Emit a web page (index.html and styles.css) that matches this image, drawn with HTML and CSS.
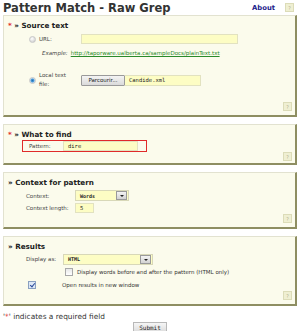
FILE: index.html
```html
<!DOCTYPE html>
<html lang="en">
<head>
    <meta charset="UTF-8">
    <title>Pattern Match - Raw Grep</title>
    <link rel="stylesheet" href="styles.css">
</head>
<body>
    <div class="page">
        <div class="topbar">
            <h1>Pattern Match - Raw Grep</h1>
            <a class="about" href="#">About</a>
            <span class="help">?</span>
        </div>

        <form class="tool-form">
            <!-- source -->
            <div class="panel panel-source">
                <h3><span class="req">*</span> &raquo; Source text</h3>
                <div class="row row-url">
                    <span class="radio"></span>
                    <label class="lbl">URL:</label>
                    <span class="field url-field"></span>
                </div>
                <div class="row row-example">
                    <em>Example:</em>
                    <a class="example-link" href="#">http://taporware.ualberta.ca/sampleDocs/plainText.txt</a>
                </div>
                <div class="row row-file">
                    <span class="radio checked"></span>
                    <label class="lbl lbl-two">Local text<br>file:</label>
                    <span class="file-pick">
                        <span class="browse">Parcourir...</span>
                        <span class="field file-field">Candide.xml</span>
                    </span>
                </div>
                <div class="panel-foot"><span class="help">?</span></div>
            </div>

            <!-- pattern -->
            <div class="panel panel-find">
                <h3><span class="req">*</span> &raquo; What to find</h3>
                <div class="pattern-box">
                    <label class="lbl">Pattern:</label>
                    <span class="field pattern-field">dire</span>
                </div>
                <div class="panel-foot"><span class="help">?</span></div>
            </div>

            <!-- context -->
            <div class="panel panel-context">
                <h3>&raquo; Context for pattern</h3>
                <div class="row row-context">
                    <label class="lbl lbl-wide">Context:</label>
                    <span class="select select-words"><span class="sel-val">Words</span><span class="sel-btn"></span></span>
                </div>
                <div class="row row-length">
                    <label class="lbl lbl-wide">Context length:</label>
                    <span class="field length-field">5</span>
                </div>
                <div class="panel-foot"><span class="help">?</span></div>
            </div>

            <!-- results -->
            <div class="panel panel-results">
                <h3>&raquo; Results</h3>
                <div class="row row-display">
                    <label class="lbl lbl-display">Display as:</label>
                    <span class="select select-html"><span class="sel-val">HTML</span><span class="sel-btn"></span></span>
                </div>
                <div class="row row-words">
                    <span class="check"></span>
                    <span class="txt">Display words before and after the pattern (HTML only)</span>
                </div>
                <div class="row row-window">
                    <span class="check checked"></span>
                    <span class="txt">Open results in new window</span>
                </div>
                <div class="panel-foot"><span class="help">?</span></div>
            </div>

            <p class="note">'<span class="req">*</span>' indicates a required field</p>
            <div class="submit-row"><span class="submit">Submit</span></div>
        </form>
    </div>
</body>
</html>
```

FILE: styles.css
```css
* {
    margin: 0;
    padding: 0;
    box-sizing: border-box;
}

body {
    font-family: 'DejaVu Sans', Verdana, sans-serif;
    font-size: 5.5px;
    color: #333;
    background: #fff;
    padding: 0 3px;
}

.topbar {
    display: flex;
    align-items: center;
    height: 15px;
}

.topbar h1 {
    font-size: 11.5px;
    font-weight: bold;
    color: #333;
    flex: 1;
    letter-spacing: 0;
}

.about {
    font-size: 6.8px;
    font-weight: bold;
    color: #22228a;
    text-decoration: none;
    margin-right: 10px;
}

.help {
    display: flex;
    align-items: center;
    justify-content: center;
    width: 9px;
    height: 9px;
    background: #efefd2;
    border: 1px solid #dcdcb8;
    color: #b0b090;
    font-size: 5px;
}

.topbar .help {
    margin-right: 3px;
}

.panel {
    background: #fbfbec;
    border: 1px solid #e2e2d0;
    border-right: 2px solid #8e8e62;
    border-bottom: 2px solid #8e8e62;
    margin-bottom: 7px;
    padding: 4px 0 0 4px;
    display: flex;
    flex-direction: column;
}

.panel h3 {
    font-size: 7.2px;
    font-weight: bold;
    color: #222;
    height: 11px;
    line-height: 11px;
}

.req {
    color: #e02020;
}

.panel-foot {
    display: flex;
    justify-content: flex-end;
    padding-right: 3px;
    margin-top: auto;
    padding-bottom: 4px;
}

.row {
    display: flex;
    align-items: center;
}

.radio {
    width: 7px;
    height: 7px;
    border-radius: 50%;
    background: radial-gradient(circle at 40% 35%, #fff 0%, #d6d6d6 70%, #b8b8b8 100%);
    border: 1px solid #c8c8c8;
    margin-left: 21px;
    margin-right: 3px;
}

.radio.checked {
    background: radial-gradient(circle, #1d6fb5 0%, #4a9ad8 40%, #cfe3f2 70%, #b8c8d8 100%);
}

.lbl {
    color: #444;
}

.field {
    display: flex;
    align-items: center;
    background: #fdfdc4;
    border: 1px solid #e2e2c0;
    font-family: 'DejaVu Sans Mono', 'Liberation Mono', monospace;
    font-size: 5.5px;
    color: #222;
    padding-left: 4px;
    height: 10px;
}

.row-url {
    height: 12px;
    margin-top: 2px;
}

.row-url .lbl {
    width: 42px;
}

.url-field {
    width: 157px;
}

.row-example {
    height: 10px;
    padding-left: 34px;
    margin-top: 3px;
}

.row-example em {
    color: #444;
    margin-right: 3px;
}

.example-link {
    color: #2a8a2a;
}

.row-file {
    margin-top: 15px;
    height: 14px;
}

.row-file .lbl {
    width: 42px;
    line-height: 9px;
}

.file-pick {
    display: flex;
}

.browse {
    display: flex;
    align-items: center;
    justify-content: center;
    width: 44px;
    height: 11px;
    background: linear-gradient(#f4f4f4, #dadada);
    border: 1px solid #9a9a9a;
    border-radius: 1px;
    color: #222;
    font-size: 5.5px;
}

.file-field {
    width: 76px;
    height: 11px;
    border-left: 0;
}

.panel-source {
    height: 102px;
}

.panel-find {
    height: 41px;
}

.pattern-box {
    display: flex;
    align-items: center;
    width: 125px;
    height: 16px;
    margin-left: 14px;
    border: 1.5px solid #e02a2a;
    padding-left: 6px;
}

.pattern-box .lbl {
    width: 34px;
}

.pattern-field {
    width: 75px;
    height: 10px;
}

.panel-context {
    height: 57px;
}

.lbl-wide {
    width: 49px;
    margin-left: 18px;
}

.row-context {
    height: 12px;
    margin-top: 2px;
}

.row-length {
    height: 12px;
    margin-top: 1px;
}

.select {
    display: flex;
    align-items: center;
    height: 11px;
    background: #fdfdc4;
    border: 1px solid #d8d8b8;
    font-family: 'DejaVu Sans Mono', monospace;
    font-weight: bold;
    font-size: 5px;
    color: #222;
}

.sel-val {
    flex: 1;
    padding-left: 4px;
}

.sel-btn {
    width: 11px;
    height: 9px;
    margin-right: 1px;
    background: linear-gradient(#f4f4f4, #d2d2d2);
    border: 1px solid #9a9a9a;
    position: relative;
}

.sel-btn::after {
    content: "";
    position: absolute;
    left: 3px;
    top: 3px;
    border-left: 2px solid transparent;
    border-right: 2px solid transparent;
    border-top: 2px solid #222;
}

.select-words {
    width: 54px;
}

.length-field {
    width: 19px;
    height: 10px;
}

.panel-results {
    height: 70px;
}

.lbl-display {
    width: 37px;
    margin-left: 18px;
}

.select-html {
    width: 90px;
}

.row-display {
    height: 12px;
    margin-top: 1px;
}

.check {
    width: 8px;
    height: 8px;
    border: 1px solid #a8a8a8;
    background: linear-gradient(#e8e8e8, #fff);
}

.check.checked {
    background: #dde8f6;
    border-color: #8aa0c0;
    position: relative;
}

.check.checked::after {
    content: "";
    position: absolute;
    left: 2px;
    top: 0;
    width: 2px;
    height: 4px;
    border-right: 1px solid #2a4a9a;
    border-bottom: 1px solid #2a4a9a;
    transform: rotate(40deg);
}

.row-words {
    height: 11px;
    padding-left: 57px;
    margin-top: 1px;
}

.row-words .txt {
    margin-left: 4px;
}

.row-window {
    height: 13px;
    padding-left: 20px;
    margin-top: 1px;
}

.row-window .txt {
    margin-left: 26px;
}

.note {
    color: #333;
    font-size: 7.4px;
    height: 11px;
    line-height: 11px;
    margin-top: -2px;
}

.submit-row {
    display: flex;
    justify-content: center;
}

.submit {
    display: flex;
    align-items: center;
    justify-content: center;
    width: 34px;
    height: 11px;
    background: linear-gradient(#f6f6f6, #dcdcdc);
    border: 1px solid #b8b8b8;
    font-family: 'DejaVu Sans Mono', monospace;
    font-size: 6px;
    color: #222;
}
```
